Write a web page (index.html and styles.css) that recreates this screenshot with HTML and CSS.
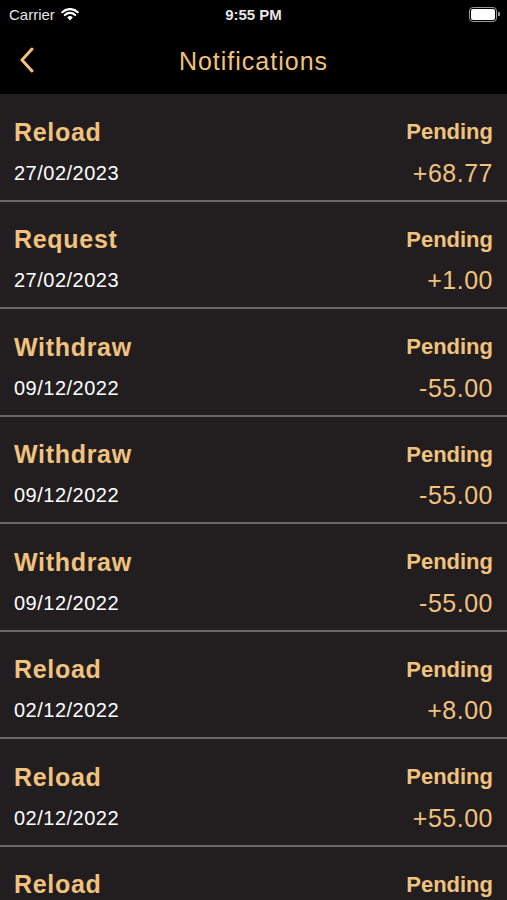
FILE: index.html
```html
<!DOCTYPE html>
<html lang="en">
<head>
<meta charset="UTF-8">
<meta name="viewport" content="width=device-width, initial-scale=1.0">
<title>Notifications</title>
<link rel="stylesheet" href="styles.css">
</head>
<body>
<div id="app">
    <div class="status-bar">
        <div class="carrier">
            Carrier
            <svg class="wifi" width="18" height="13" viewBox="0 0 18 13">
                <path d="M9 12.5 L6.2 9.4 A4 4 0 0 1 11.8 9.4 Z" fill="#fff"/>
                <path d="M3.9 7 A7.3 7.3 0 0 1 14.1 7" stroke="#fff" stroke-width="2.2" fill="none" stroke-linecap="round"/>
                <path d="M1.3 4.2 A11 11 0 0 1 16.7 4.2" stroke="#fff" stroke-width="2.2" fill="none" stroke-linecap="round"/>
            </svg>
        </div>
        <div class="time">9:55 PM</div>
        <div class="battery">
            <span class="battery-body"><span class="battery-fill"></span></span>
            <span class="battery-nub"></span>
        </div>
    </div>
    <nav class="nav-bar">
        <svg class="back" width="16" height="26" viewBox="0 0 16 26">
            <path d="M13 2 L3 13 L13 24" stroke="#f0c27e" stroke-width="3" fill="none" stroke-linecap="round" stroke-linejoin="round"/>
        </svg>
        <h1>Notifications</h1>
    </nav>
    <ul class="list">
        <li class="item">
            <div class="line"><span class="type">Reload</span><span class="status">Pending</span></div>
            <div class="line line-2"><span class="date">27/02/2023</span><span class="amount">+68.77</span></div>
        </li>
        <li class="item">
            <div class="line"><span class="type">Request</span><span class="status">Pending</span></div>
            <div class="line line-2"><span class="date">27/02/2023</span><span class="amount">+1.00</span></div>
        </li>
        <li class="item">
            <div class="line"><span class="type">Withdraw</span><span class="status">Pending</span></div>
            <div class="line line-2"><span class="date">09/12/2022</span><span class="amount">-55.00</span></div>
        </li>
        <li class="item">
            <div class="line"><span class="type">Withdraw</span><span class="status">Pending</span></div>
            <div class="line line-2"><span class="date">09/12/2022</span><span class="amount">-55.00</span></div>
        </li>
        <li class="item">
            <div class="line"><span class="type">Withdraw</span><span class="status">Pending</span></div>
            <div class="line line-2"><span class="date">09/12/2022</span><span class="amount">-55.00</span></div>
        </li>
        <li class="item">
            <div class="line"><span class="type">Reload</span><span class="status">Pending</span></div>
            <div class="line line-2"><span class="date">02/12/2022</span><span class="amount">+8.00</span></div>
        </li>
        <li class="item">
            <div class="line"><span class="type">Reload</span><span class="status">Pending</span></div>
            <div class="line line-2"><span class="date">02/12/2022</span><span class="amount">+55.00</span></div>
        </li>
        <li class="item">
            <div class="line"><span class="type">Reload</span><span class="status">Pending</span></div>
            <div class="line line-2"><span class="date">02/12/2022</span><span class="amount">+55.00</span></div>
        </li>
    </ul>
</div>
</body>
</html>
```

FILE: styles.css
```css
html, body {
    margin: 0;
    padding: 0;
    background: #221e1f;
}
body {
    font-family: "Liberation Sans", Arial, sans-serif;
    height: 900px;
    overflow: hidden;
}
#app {
    width: 507px;
}
.status-bar {
    height: 28px;
    background: #000;
    color: #e6e6e6;
    display: flex;
    align-items: center;
    justify-content: space-between;
    padding: 0 7px 0 9px;
    box-sizing: border-box;
    position: relative;
}
.carrier {
    font-size: 15px;
    display: flex;
    align-items: center;
    gap: 6px;
}
.time {
    font-size: 15px;
    font-weight: bold;
    position: absolute;
    left: 0;
    right: 0;
    text-align: center;
    pointer-events: none;
}
.battery {
    display: flex;
    align-items: center;
}
.battery-body {
    width: 24px;
    height: 11px;
    border: 1.5px solid #999;
    border-radius: 4px;
    padding: 1px;
    display: flex;
}
.battery-fill {
    flex: 1;
    background: #fff;
    border-radius: 2px;
}
.battery-nub {
    width: 2px;
    height: 4px;
    background: #999;
    border-radius: 0 1px 1px 0;
    margin-left: 1px;
}
.nav-bar {
    height: 66px;
    background: #000;
    display: flex;
    align-items: center;
    justify-content: center;
    position: relative;
}
.back {
    position: absolute;
    left: 19px;
    top: 19px;
}
.nav-bar h1 {
    margin: 0;
    font-size: 25px;
    font-weight: normal;
    letter-spacing: 1px;
    color: #f0c27e;
}
.list {
    margin: 0;
    padding: 0;
    list-style: none;
}
.item {
    height: 107.5px;
    box-sizing: border-box;
    padding: 23px 14px 0;
    border-bottom: 2px solid #696868;
}
.line {
    height: 30px;
    display: flex;
    align-items: center;
    justify-content: space-between;
}
.line-2 {
    height: 32px;
    margin-top: 10px;
}
.type {
    font-size: 25px;
    font-weight: bold;
    color: #f0c27e;
    letter-spacing: 0.7px;
}
.status {
    font-size: 22px;
    font-weight: bold;
    color: #f0c27e;
}
.date {
    font-size: 20px;
    color: #fff;
    letter-spacing: 0.5px;
}
.amount {
    font-size: 25px;
    color: #f0c27e;
    letter-spacing: 0.5px;
}
```
